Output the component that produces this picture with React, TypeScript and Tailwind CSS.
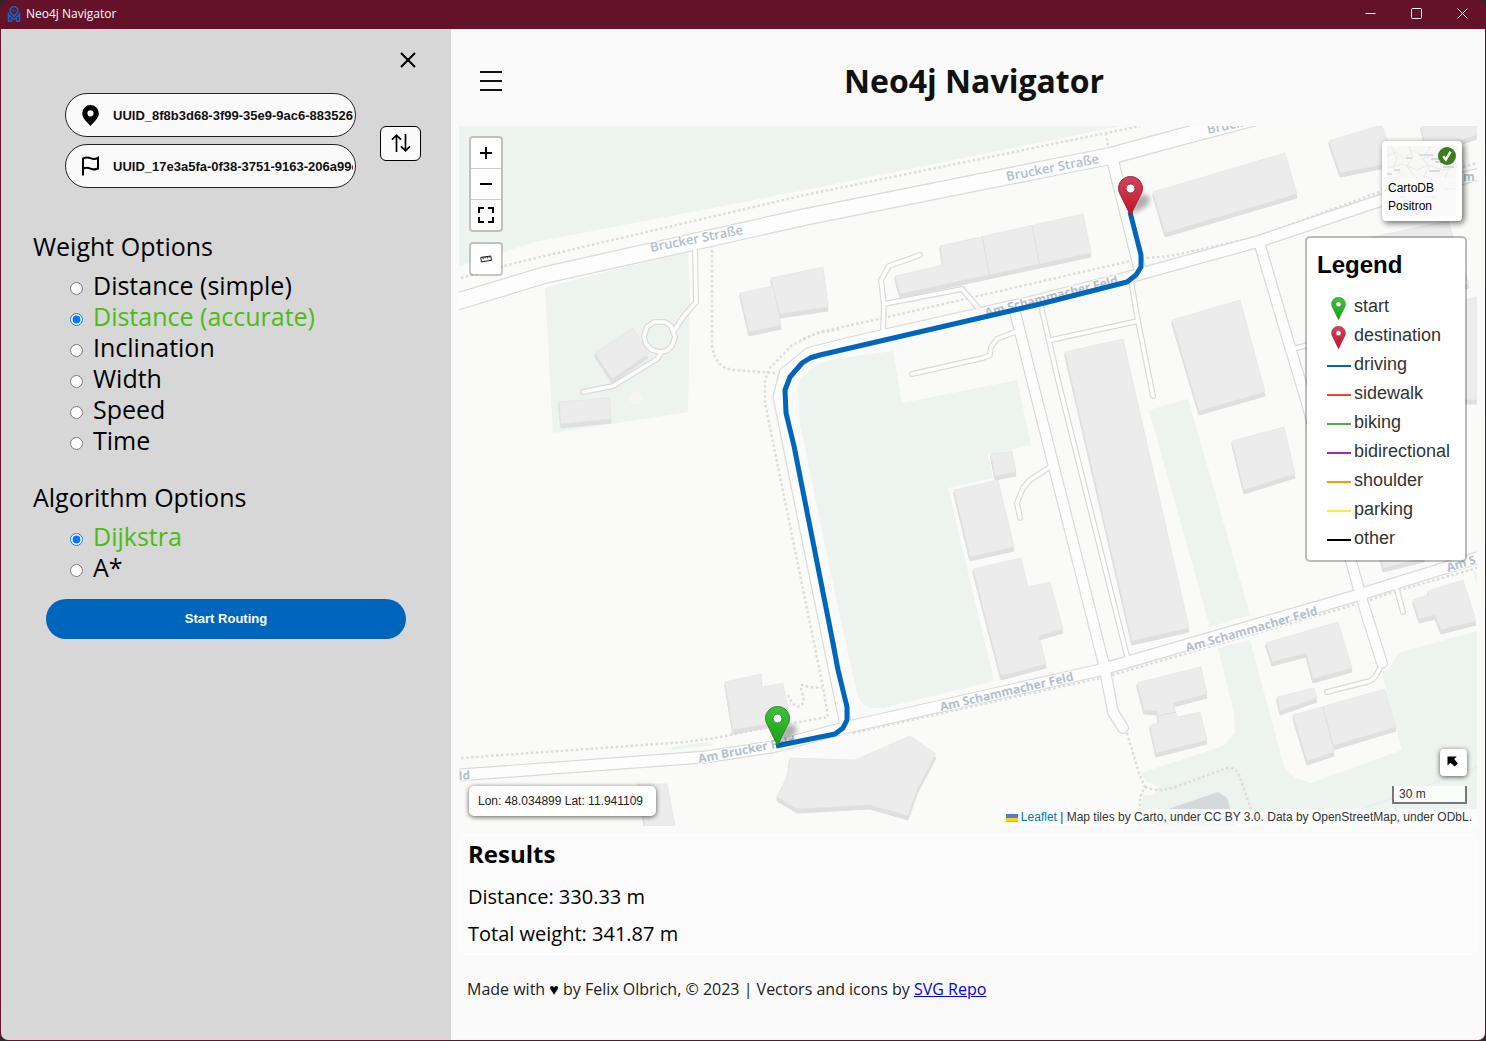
import { useState } from "react";
import type { ReactNode } from "react";

const WEIGHTS = ["Distance (simple)", "Distance (accurate)", "Inclination", "Width", "Speed", "Time"];
const ALGORITHMS = ["Dijkstra", "A*"];

const LINES = [
  { name: "driving", color: "bg-[#0065bd]" },
  { name: "sidewalk", color: "bg-[#f44336]" },
  { name: "biking", color: "bg-[#4caf50]" },
  { name: "bidirectional", color: "bg-[#9c27b0]" },
  { name: "shoulder", color: "bg-[#ff9800]" },
  { name: "parking", color: "bg-[#ffeb3b]" },
  { name: "other", color: "bg-black" },
];

const GREENS = [
  "459,126 1120,126 805,190 535,242 459,266",
  "545,288 565,282 688,252 690,300 688,412 553,433",
  "798,390 800,380 806,373 820,363 835,359 893,351 902,403 1017,380 1031,445 988,455 993,478 948,488 994,681 883,708 870,708 861,702 857,694 828,560 800,423",
  "1149,410 1188,399 1250,615 1210,627",
  "1218,648 1250,640 1283,763 1287,771 1296,778 1311,783 1402,750 1382,673 1390,667 1398,653 1477,631 1477,826 1140,826 1143,795 1155,795 1158,786 1147,782 1141,773 1223,746 1235,733 1234,713",
  "672,747 708,742 713,745 672,750",
  "1473,572 1477,571 1477,586",
];

const BUILDINGS = [
  "595,353 633,328 648,354 612,379",
  "559,402 609,398 611,419 561,424",
  "740,293 773,286 781,325 749,332",
  "771,278 823,267 828,307 780,314",
  "940,246 1083,214 1091,253 900,294 895,276 943,265",
  "1153,192 1285,153 1297,194 1165,233",
  "1329,141 1378,126 1382,126 1396,162 1340,173",
  "1421,126 1477,126 1477,135 1463,140 1426,148",
  "1372,237 1448,221 1469,284 1400,300",
  "1440,306 1465,300 1477,297 1477,400 1460,400",
  "1172,320 1240,300 1265,392 1199,411",
  "1065,352 1123,339 1189,628 1132,641",
  "1232,441 1284,427 1295,474 1244,490",
  "991,454 1012,451 1016,472 995,476",
  "954,490 998,480 1014,547 970,557",
  "973,569 1021,558 1028,587 1050,582 1063,629 1039,636 1046,664 1001,676",
  "725,682 761,674 762,687 783,683 790,720 733,730",
  "790,758 855,760 910,736 936,754 917,790 908,816 870,805 797,809 777,797 788,775",
  "637,784 667,784 675,826 645,826",
  "1137,683 1201,667 1207,694 1173,703 1177,717 1200,712 1207,740 1156,753 1150,726 1159,722 1157,711 1144,710",
  "1266,643 1338,622 1352,668 1313,679 1306,653 1272,662",
  "1277,697 1314,688 1317,698 1280,711",
  "1293,715 1385,689 1396,727 1333,746 1334,752 1307,761",
  "1413,600 1428,595 1428,591 1463,580 1476,621 1441,630 1435,615 1419,619",
  "1380,555 1425,555 1424,558 1383,568",
];

const SEAMS = "M982 236l8 42M1032 225l8 42M1323 707l10 39M1158 716l18-4";

type Road = { d: string; w: number };
const ROADS: Road[] = [
  { d: "M440 306L459 301L545 275L805 217L1110 156L1180 137L1260 116", w: 18 },
  { d: "M1112 158L1140 270", w: 13 },
  { d: "M1490 171L1382 200L1260 241L1133 276L1040 300L850 343L810 353L785 373L779 397L812 560L846 726", w: 13 },
  { d: "M440 777L459 775L705 757L772 747L848 727L1100 670L1355 596L1490 554", w: 13 },
  { d: "M1014 308L1032 380L1104 665L1113 712L1123 728", w: 12 },
  { d: "M1260 245L1290 347L1306 400L1351 561L1362 600L1382 663", w: 12 },
  { d: "M695 246L696 302L683 317L674 331", w: 6 },
  { d: "M654 322L665 322L671 326L675 337L672 346L666 351L660 352L652 350L646 344L644 336L647 327Z", w: 6 },
  { d: "M661 353L657 359L613 386L583 392", w: 6 },
  { d: "M883 330L884 305L881 280L889 266L920 255", w: 6 },
  { d: "M884 304L962 289L980 310", w: 6 },
  { d: "M1015 332L997 339L991 347L990 355L983 358L912 374", w: 6 },
  { d: "M1041 306L1058 380L1127 656", w: 6 },
  { d: "M1051 340L1138 321", w: 6 },
  { d: "M1131 281L1138 321L1153 396", w: 6 },
  { d: "M1050 467L1030 480L1023 488L1017 503L1020 518", w: 6 },
  { d: "M1292 349L1312 344", w: 6 },
  { d: "M1380 668L1375 677L1370 681L1327 692", w: 6 },
  { d: "M1397 590L1403 612", w: 6 },
];

const FOOTPATHS = [
  "M461 278L515 263L655 230L805 195L1140 126",
  "M1106 133L1108 146",
  "M712 245L712 345Q715 369 735 370L775 373",
  "M883 318L820 332L800 340",
  "M839 329L815 334L792 345L770 368L765 380L765 403L797 560L823 687L828 717L793 723",
  "M883 318L1130 261",
  "M1147 258L1170 256L1257 237L1382 191L1477 163",
  "M461 758L685 742L715 738L765 728",
  "M788 695Q794 709 800 706T802 692T808 687L822 688",
  "M853 733L1100 678",
  "M1112 675L1357 604",
  "M1370 600L1393 592L1477 568",
  "M1127 733L1139 773L1145 787L1140 797L1140 826",
  "M1145 787Q1160 793 1175 787L1227 768Q1236 767 1239 775L1257 826",
];

const ROUTE =
  "M1130 212L1141 255L1141 267L1136 275L1127 282L1040 304L820 355L810 358L802 363L790 377L785 390L786 413L794 446L831 633L838 670L847 707L847 720L843 728L835 734L776 746";

const STREETS = [
  { text: "Brucker Straße", x: 651, y: 252, a: -11, size: 13, weight: 600 },
  { text: "Brucker Straße", x: 1007, y: 181, a: -11, size: 13, weight: 600 },
  { text: "Bruck", x: 1208, y: 134, a: -12, size: 13, weight: 600 },
  { text: "Am Schammacher Feld", x: 986, y: 317, a: -14, size: 12, weight: 700 },
  { text: "Am Schammacher Feld", x: 941, y: 711, a: -13, size: 12, weight: 700 },
  { text: "Am Schammacher Feld", x: 1187, y: 652, a: -16, size: 12, weight: 700 },
  { text: "Am S", x: 1448, y: 572, a: -17, size: 12, weight: 700 },
  { text: "Am Brucker Feld", x: 699, y: 763, a: -11, size: 12, weight: 700 },
];

const PIN = "M12.5 .5C5.9 .5 .5 5.8 .5 12.4c0 2.3.8 4.5 1.9 6.4L12.5 39.5 22.6 18.8c1.1-1.9 1.9-4.1 1.9-6.4C24.500 5.8 19.1 .5 12.500 .5z";

function PinShape({ kind }: { kind: "start" | "destination" }) {
  return (
    <g>
      <path
        d={PIN}
        fill={kind === "start" ? "url(#pinGreen)" : "url(#pinRed)"}
        stroke={kind === "start" ? "#2e8b23" : "#982e40"}
        strokeWidth="1"
      />
      <circle cx="12.5" cy="12.5" r="4.500" fill="#fff" stroke={kind === "start" ? "#2e8b23" : "#982e40"} strokeWidth="1" />
    </g>
  );
}

function MapPin({ kind, x, y }: { kind: "start" | "destination"; x: number; y: number }) {
  return (
    <g transform={`translate(${x} ${y})`}>
      <path d="M13 39L18 22Q26 15 31 21Q33 26 27 31Z" fill="#000" opacity=".3" filter="url(#soft)" />
      <PinShape kind={kind} />
    </g>
  );
}

function MapCanvas() {
  return (
    <svg
      className="absolute inset-0 h-full w-full"
      viewBox="459 126 1018 700"
      preserveAspectRatio="xMidYMid slice"
      role="img"
      aria-label="Route map"
    >
      <defs>
        <linearGradient id="pinGreen" x1="0" y1="0" x2="0" y2="1">
          <stop offset="0" stopColor="#3fc13a" />
          <stop offset="1" stopColor="#17a012" />
        </linearGradient>
        <linearGradient id="pinRed" x1="0" y1="0" x2="0" y2="1">
          <stop offset="0" stopColor="#d0465a" />
          <stop offset="1" stopColor="#c50f25" />
        </linearGradient>
        <filter id="soft" x="-50%" y="-50%" width="200%" height="200%">
          <feGaussianBlur stdDeviation="2.500" />
        </filter>
      </defs>
      <rect x="0" y="0" width="2400" height="1600" fill="#fafaf8" />
      {GREENS.map((p) => (
        <polygon key={p} points={p} fill="#edf3ef" />
      ))}
      <circle cx="636" cy="398" r="6.500" fill="#f5f6f4" />
      <polygon points="1168,809 1218,792 1227,798 1235,826 1155,826" fill="#d4dadc" />
      <path d="M1365 808L1477 767" stroke="#e6ebe8" fill="none" />
      {BUILDINGS.map((p) => (
        <g key={p}>
          <polygon points={p} fill="#dfdfdf" stroke="#dfdfdf" strokeWidth="1" transform="translate(0 4)" />
          <polygon points={p} fill="#dfdfdf" transform="translate(-1 2)" />
        </g>
      ))}
      {BUILDINGS.map((p) => (
        <polygon key={p} points={p} fill="#ececec" stroke="#e3e3e3" strokeWidth=".6" />
      ))}
      <path d={SEAMS} stroke="#dedede" fill="none" />
      <g fill="none" stroke="#dcdcdc" strokeWidth="2.500" strokeDasharray="2.500 2.500">
        {FOOTPATHS.map((d) => (
          <path key={d} d={d} />
        ))}
      </g>
      <g fill="none" stroke="#dadada" strokeLinecap="round" strokeLinejoin="round">
        {ROADS.map((r) => (
          <path key={r.d} d={r.d} strokeWidth={r.w} />
        ))}
      </g>
      <g fill="none" stroke="#fdfdfd" strokeLinecap="round" strokeLinejoin="round">
        {ROADS.map((r) => (
          <path key={r.d} d={r.d} strokeWidth={r.w - 2.4} />
        ))}
      </g>
      <g fill="#b3bfc9" fontFamily="'Open Sans', 'Noto Sans', sans-serif" stroke="#fdfdfd" strokeWidth="2" paintOrder="stroke">
        {STREETS.map((s) => (
          <text
            key={s.text + s.x}
            x={s.x}
            y={s.y}
            fontSize={s.size}
            fontWeight={s.weight}
            transform={`rotate(${s.a} ${s.x} ${s.y})`}
          >
            {s.text}
          </text>
        ))}
        <text x="459" y="780" fontSize="12" fontWeight="700" transform="rotate(-3 459 780)">
          ld
        </text>
        <text x="1463" y="181" fontSize="12" fontWeight="700">
          m
        </text>
      </g>
      <path d={ROUTE} fill="none" stroke="#0065bd" strokeWidth="5" strokeLinejoin="round" />
      <MapPin kind="destination" x={1118} y={176} />
      <MapPin kind="start" x={765} y={706} />
    </svg>
  );
}

function LegendRow({ mark, children }: { mark: ReactNode; children: ReactNode }) {
  return (
    <li className="flex h-[29px] items-center gap-[3px]">
      <span className="flex w-6 justify-center">{mark}</span>
      {children}
    </li>
  );
}

function Legend() {
  return (
    <section className="w-[162px] rounded-[5px] border-2 border-black/25 bg-white bg-clip-padding pb-[7px] pl-2.5 pt-2.5 font-['Liberation_Sans',Arial,sans-serif]">
      <h2 className="mb-2.5 text-[24px] leading-[34px] font-bold text-black">Legend</h2>
      <ul className="pl-2.5 text-[18px] leading-[29px] text-[#333]">
        {(["start", "destination"] as const).map((kind) => (
          <LegendRow
            key={kind}
            mark={
              <svg viewBox="0 0 25 40" className="mr-0.5 mt-1 h-[23px] w-[15px]" aria-hidden="true">
                <PinShape kind={kind} />
              </svg>
            }
          >
            {kind}
          </LegendRow>
        ))}
        {LINES.map((l) => (
          <LegendRow key={l.name} mark={<span className={`mt-0.5 h-0.5 w-6 ${l.color}`} />}>
            {l.name}
          </LegendRow>
        ))}
      </ul>
    </section>
  );
}

function MapButton({ label, children }: { label: string; children: ReactNode }) {
  return (
    <button
      type="button"
      aria-label={label}
      className="box-content flex h-[30px] w-[30px] items-center justify-center text-black"
    >
      {children}
    </button>
  );
}

function MapPanel() {
  return (
    <div className="relative min-h-[600px] flex-1 overflow-hidden font-['Liberation_Sans',Arial,sans-serif]">
      <MapCanvas />

      <div className="absolute left-2.5 top-2.5 flex flex-col gap-2.5">
        <div className="divide-y divide-[#ccc] rounded border-2 border-black/20 bg-white bg-clip-padding">
          <MapButton label="Zoom in">
            <svg viewBox="0 0 12 12" className="h-3 w-3" aria-hidden="true">
              <path d="M0 6h12M6 0v12" stroke="currentColor" strokeWidth="2" />
            </svg>
          </MapButton>
          <MapButton label="Zoom out">
            <svg viewBox="0 0 12 12" className="h-3 w-3" aria-hidden="true">
              <path d="M0 6h12" stroke="currentColor" strokeWidth="2" />
            </svg>
          </MapButton>
          <MapButton label="Full screen">
            <svg viewBox="0 0 16 16" className="h-4 w-4" fill="none" aria-hidden="true">
              <path d="M1 6V1h5M10 1h5v5M15 10v5h-5M6 15H1v-5" stroke="currentColor" strokeWidth="2" />
            </svg>
          </MapButton>
        </div>
        <div className="rounded border-2 border-black/20 bg-white bg-clip-padding">
          <MapButton label="Measure">
            <svg viewBox="0 0 12 8" className="h-2 w-3" fill="none" aria-hidden="true">
              <path
                d="M.8 2.400L10.800 1l.6 4.300L1.400 6.900zM3 2.200l.3 2M5 1.900l.2 1.300M7 1.600l.3 2M9 1.300l.2 1.300"
                stroke="currentColor"
                strokeWidth=".9"
              />
            </svg>
          </MapButton>
        </div>
      </div>

      <button
        type="button"
        className="absolute right-[15px] top-[15px] h-20 w-20 overflow-hidden rounded border-[5px] border-white bg-[#f7f7f6] text-left text-[12px] leading-[18px] text-black shadow-[2px_2px_6px_rgba(0,0,0,0.6)]"
      >
        <svg viewBox="0 0 70 70" className="absolute inset-0 h-full w-full" fill="none" aria-hidden="true">
          <path
            d="M0 10l9-4 8 6 11-8 8 9 12-5 9 8 13-6M4 0l6 12-4 10 10 8M22 0l4 11-6 9 8 11M44 0l-8 13 6 8-5 10M0 22l16-4 14 6 12-5 14 5 14-4M60 0l-6 12 8 10-4 10"
            stroke="#e6e6e6"
            strokeWidth=".8"
          />
          <path d="M32 9h14M44 13h14M19 12h6M7 24h6M42 25h11M0 28h5M56 21h11M48 16h6" stroke="#ccd3d9" strokeWidth="1.300" />
          <path d="M0 32h70v38H0z" fill="#fafafa" />
          <path d="M58 43h10M12 51h7M38 51h11" stroke="#ebeced" />
        </svg>
        <span className="absolute left-px top-[33px]">
          CartoDB
          <br />
          Positron
        </span>
        <svg viewBox="0 0 18 18" className="absolute right-px top-px h-[18px] w-[18px]" aria-hidden="true">
          <circle cx="9" cy="9" r="9" fill="#3a7d1f" />
          <path d="M5.200 9.300l2.600 3.300 4.800-8" fill="none" stroke="#fff" strokeWidth="2.400" />
        </svg>
      </button>

      <div className="absolute right-2.5 top-[110px]">
        <Legend />
      </div>

      <div className="absolute bottom-2.5 left-2.5 rounded-[5px] bg-white px-[9px] py-1.5 text-[12px] leading-[18px] text-[#222] shadow-[0_1px_5px_rgba(0,0,0,0.65)]">
        <p className="min-w-[169px]">Lon: 48.034899 Lat: 11.941109</p>
      </div>

      <div className="absolute bottom-0 right-0 flex flex-col items-end">
        <button
          type="button"
          aria-label="Collapse overview map"
          className="mb-2.5 mr-2.5 flex h-[27px] w-[27px] items-center justify-center rounded bg-white text-black shadow-[0_1px_5px_rgba(0,0,0,0.65)]"
        >
          <svg viewBox="0 0 11 11" className="mb-0.5 mr-0.5 h-[11px] w-[11px]" aria-hidden="true">
            <path d="M.5 .5h9.300L7.200 3.100l3.600 4.400-3 3L3.400 6.800.5 9.600z" fill="currentColor" />
          </svg>
        </button>
        <div className="mb-[5px] mr-2.5 h-[18px] w-[75px] border-2 border-t-0 border-[#777] bg-white/70 pl-[5px] text-[12px] leading-4 text-[#333]">
          30 m
        </div>
        <p className="flex h-[17px] items-center whitespace-pre bg-white/80 px-[5px] text-[12px] leading-[17px] text-[#333]">
          <a href="#leaflet" className="flex items-center gap-[3px] text-[#0078a8]">
            <svg viewBox="0 0 12 8" className="h-2 w-3" aria-hidden="true">
              <path d="M0 0h12v4H0z" fill="#4c7be1" />
              <path d="M0 4h12v3H0z" fill="#ffd500" />
              <path d="M0 7h12v1H0z" fill="#e0bc00" />
            </svg>
            Leaflet
          </a>
          {" | Map tiles by Carto, under CC BY 3.0. Data by OpenStreetMap, under ODbL."}
        </p>
      </div>
    </div>
  );
}

function OptionGroup({ title, name, options, initial }: { title: string; name: string; options: string[]; initial: string }) {
  const [value, setValue] = useState(initial);
  return (
    <fieldset>
      <legend className="mb-[7px] text-[25px] leading-[34px]">{title}</legend>
      {options.map((o) => (
        <label
          key={o}
          className={`ml-[37px] flex h-[31px] w-fit items-center gap-2.5 text-[25px] leading-[31px] ${o === value ? "text-[#4dbb17]" : "text-black"}`}
        >
          <input
            type="radio"
            name={name}
            value={o}
            checked={o === value}
            onChange={() => setValue(o)}
            className="mt-1.5 h-[13px] w-[13px]"
          />
          {o}
        </label>
      ))}
    </fieldset>
  );
}

function PlaceField({ label, value, icon }: { label: string; value: string; icon: ReactNode }) {
  return (
    <label className="flex h-11 items-center overflow-hidden rounded-full border border-[#222] bg-[#fafafa] pl-[13px] pr-0.5">
      <span className="mr-3 flex w-[22px] justify-center">{icon}</span>
      <input
        type="text"
        aria-label={label}
        defaultValue={value}
        className="h-full min-w-0 flex-1 bg-transparent font-['Liberation_Sans',Arial,sans-serif] text-[13px] font-bold text-[#111] outline-none"
      />
    </label>
  );
}

function Sidebar() {
  return (
    <aside className="w-[450px] shrink-0 bg-[#d7d7d7] text-black">
      <div className="flex h-16 justify-end pr-[27px] pt-[15px]">
        <button type="button" aria-label="Close menu" className="flex h-8 w-8 items-center justify-center">
          <svg viewBox="0 0 16 16" className="h-4 w-4" aria-hidden="true">
            <path d="M1 1l14 14M15 1L1 15" stroke="currentColor" strokeWidth="2" />
          </svg>
        </button>
      </div>
      <div className="flex items-center gap-6 pl-16 pr-[30px]">
        <div className="flex min-w-0 flex-1 flex-col gap-[7px]">
          <PlaceField
            label="Start"
            value="UUID_8f8b3d68-3f99-35e9-9ac6-883526de1a77"
            icon={
              <svg viewBox="0 0 17 21" className="h-[21px] w-[17px]" aria-hidden="true">
                <path
                  fillRule="evenodd"
                  d="M8.500 0A8.300 8.300 0 0 0 .2 8.300C.2 13.500 5 17 8.500 21c3.500-4 8.300-7.500 8.300-12.700A8.300 8.300 0 0 0 8.500 0zm0 5.200a3.100 3.100 0 1 1 0 6.200 3.100 3.100 0 0 1 0-6.200z"
                />
              </svg>
            }
          />
          <PlaceField
            label="Destination"
            value="UUID_17e3a5fa-0f38-3751-9163-206a99c4b0d2"
            icon={
              <svg viewBox="0 0 17 20" className="h-5 w-[17px]" fill="none" aria-hidden="true">
                <path d="M1 19.500V2.500Q4.500.5 8.500 2.200T16 1.800V12.500Q12.500 14.200 8.500 12.600T1 12.800" stroke="currentColor" strokeWidth="2" />
              </svg>
            }
          />
        </div>
        <button
          type="button"
          aria-label="Swap start and destination"
          className="mt-1.5 flex h-[35px] w-[41px] items-center justify-center rounded-md border border-black bg-[#fafafa]"
        >
          <svg viewBox="0 0 20 18" className="mb-0.5 h-[18px] w-5" fill="none" aria-hidden="true">
            <path d="M5.500 18V1.200M1 5.700l4.500-4.500L10 5.700M14.500 0v16.800M10 12.300l4.500 4.500 4.500-4.500" stroke="currentColor" strokeWidth="1.700" />
          </svg>
        </button>
      </div>
      <form className="flex flex-col gap-6 pl-8 pr-[45px] pt-[41px]" onSubmit={(e) => e.preventDefault()}>
        <OptionGroup title="Weight Options" name="weight" options={WEIGHTS} initial="Distance (accurate)" />
        <OptionGroup title="Algorithm Options" name="algorithm" options={ALGORITHMS} initial="Dijkstra" />
        <button
          type="submit"
          className="-mt-2 ml-[13px] h-10 rounded-full bg-[#0065bd] font-['Liberation_Sans',Arial,sans-serif] text-[13px] font-bold text-white"
        >
          Start Routing
        </button>
      </form>
    </aside>
  );
}

function TitleBar() {
  return (
    <header className="flex h-7 shrink-0 items-center justify-between bg-[#64112a] pb-[3px] text-white">
      <div className="flex items-center gap-[5px] pl-1.5">
        <svg viewBox="0 0 14 16" className="h-4 w-[14px]" fill="none" stroke="#1267c4" aria-hidden="true">
          <path d="M7 10.500L3.800 6.500A3.800 3.800 0 1 1 10.200 6.500z" strokeWidth="1.600" />
          <circle cx="7" cy="4.500" r="1" strokeWidth=".8" />
          <path d="M1.500 16V6.500M12.500 16V6.500M1 8l6 5.500L13 8M4.500 16v-3.500M9.500 16v-3.500M1 15.500h3.500M9.500 15.500H13" strokeWidth="1.600" />
        </svg>
        <span className="font-['Open_Sans',sans-serif] text-[12px] leading-4">Neo4j Navigator</span>
      </div>
      <div className="flex">
        {[
          { label: "Minimize", d: "M.5 5.500h10" },
          { label: "Maximize", d: "M1.500 .5h8a1 1 0 0 1 1 1v8a1 1 0 0 1-1 1h-8a1 1 0 0 1-1-1v-8a1 1 0 0 1 1-1z" },
          { label: "Close", d: "M.5 .5l10 10M10.500 .5l-10 10" },
        ].map((b) => (
          <button key={b.label} type="button" aria-label={b.label} className="flex h-6 w-[46px] items-center justify-center">
            <svg viewBox="0 0 11 11" className="h-[11px] w-[11px]" fill="none" aria-hidden="true">
              <path d={b.d} stroke="currentColor" />
            </svg>
          </button>
        ))}
      </div>
    </header>
  );
}

export default function App() {
  return (
    <div className="bg-[#2b2b2b] font-['Open_Sans','Noto_Sans',sans-serif]">
      <div className="flex min-h-screen flex-col overflow-hidden rounded-lg border border-[#64112a]">
        <TitleBar />
        <div className="flex flex-1">
          <Sidebar />
          <main className="flex min-w-0 flex-1 flex-col bg-[#fafafa] px-2 text-[#111]">
            <div className="flex h-[97px] shrink-0 items-center pl-4 pr-9 pt-1.5">
              <button type="button" aria-label="Open menu" className="flex h-8 w-8 items-center justify-center">
                <svg viewBox="0 0 22 22" className="h-[22px] w-[22px]" aria-hidden="true">
                  <path d="M0 2h22M0 11h22M0 20h22" stroke="currentColor" strokeWidth="2" />
                </svg>
              </button>
              <h1 className="flex-1 text-center text-[32px] leading-[44px] font-bold">Neo4j Navigator</h1>
            </div>
            <MapPanel />
            <section className="mt-2 rounded-lg border border-white bg-[#fbfbfb] px-2 pb-0.5 pt-[3px] text-black">
              <h2 className="mb-2 text-[24px] leading-8 font-bold">Results</h2>
              <p className="text-[20px] leading-[37px]">Distance: 330.33 m</p>
              <p className="text-[20px] leading-[37px]">Total weight: 341.87 m</p>
            </section>
            <footer className="px-2 pb-[39px] pt-[22px] text-[16px] leading-6 text-[#222]">
              Made with <span className="text-black">♥</span> by Felix Olbrich, © 2023 | Vectors and icons by{" "}
              <a href="#svgrepo" className="text-[#0000ee] underline">
                SVG Repo
              </a>
            </footer>
          </main>
        </div>
      </div>
    </div>
  );
}
